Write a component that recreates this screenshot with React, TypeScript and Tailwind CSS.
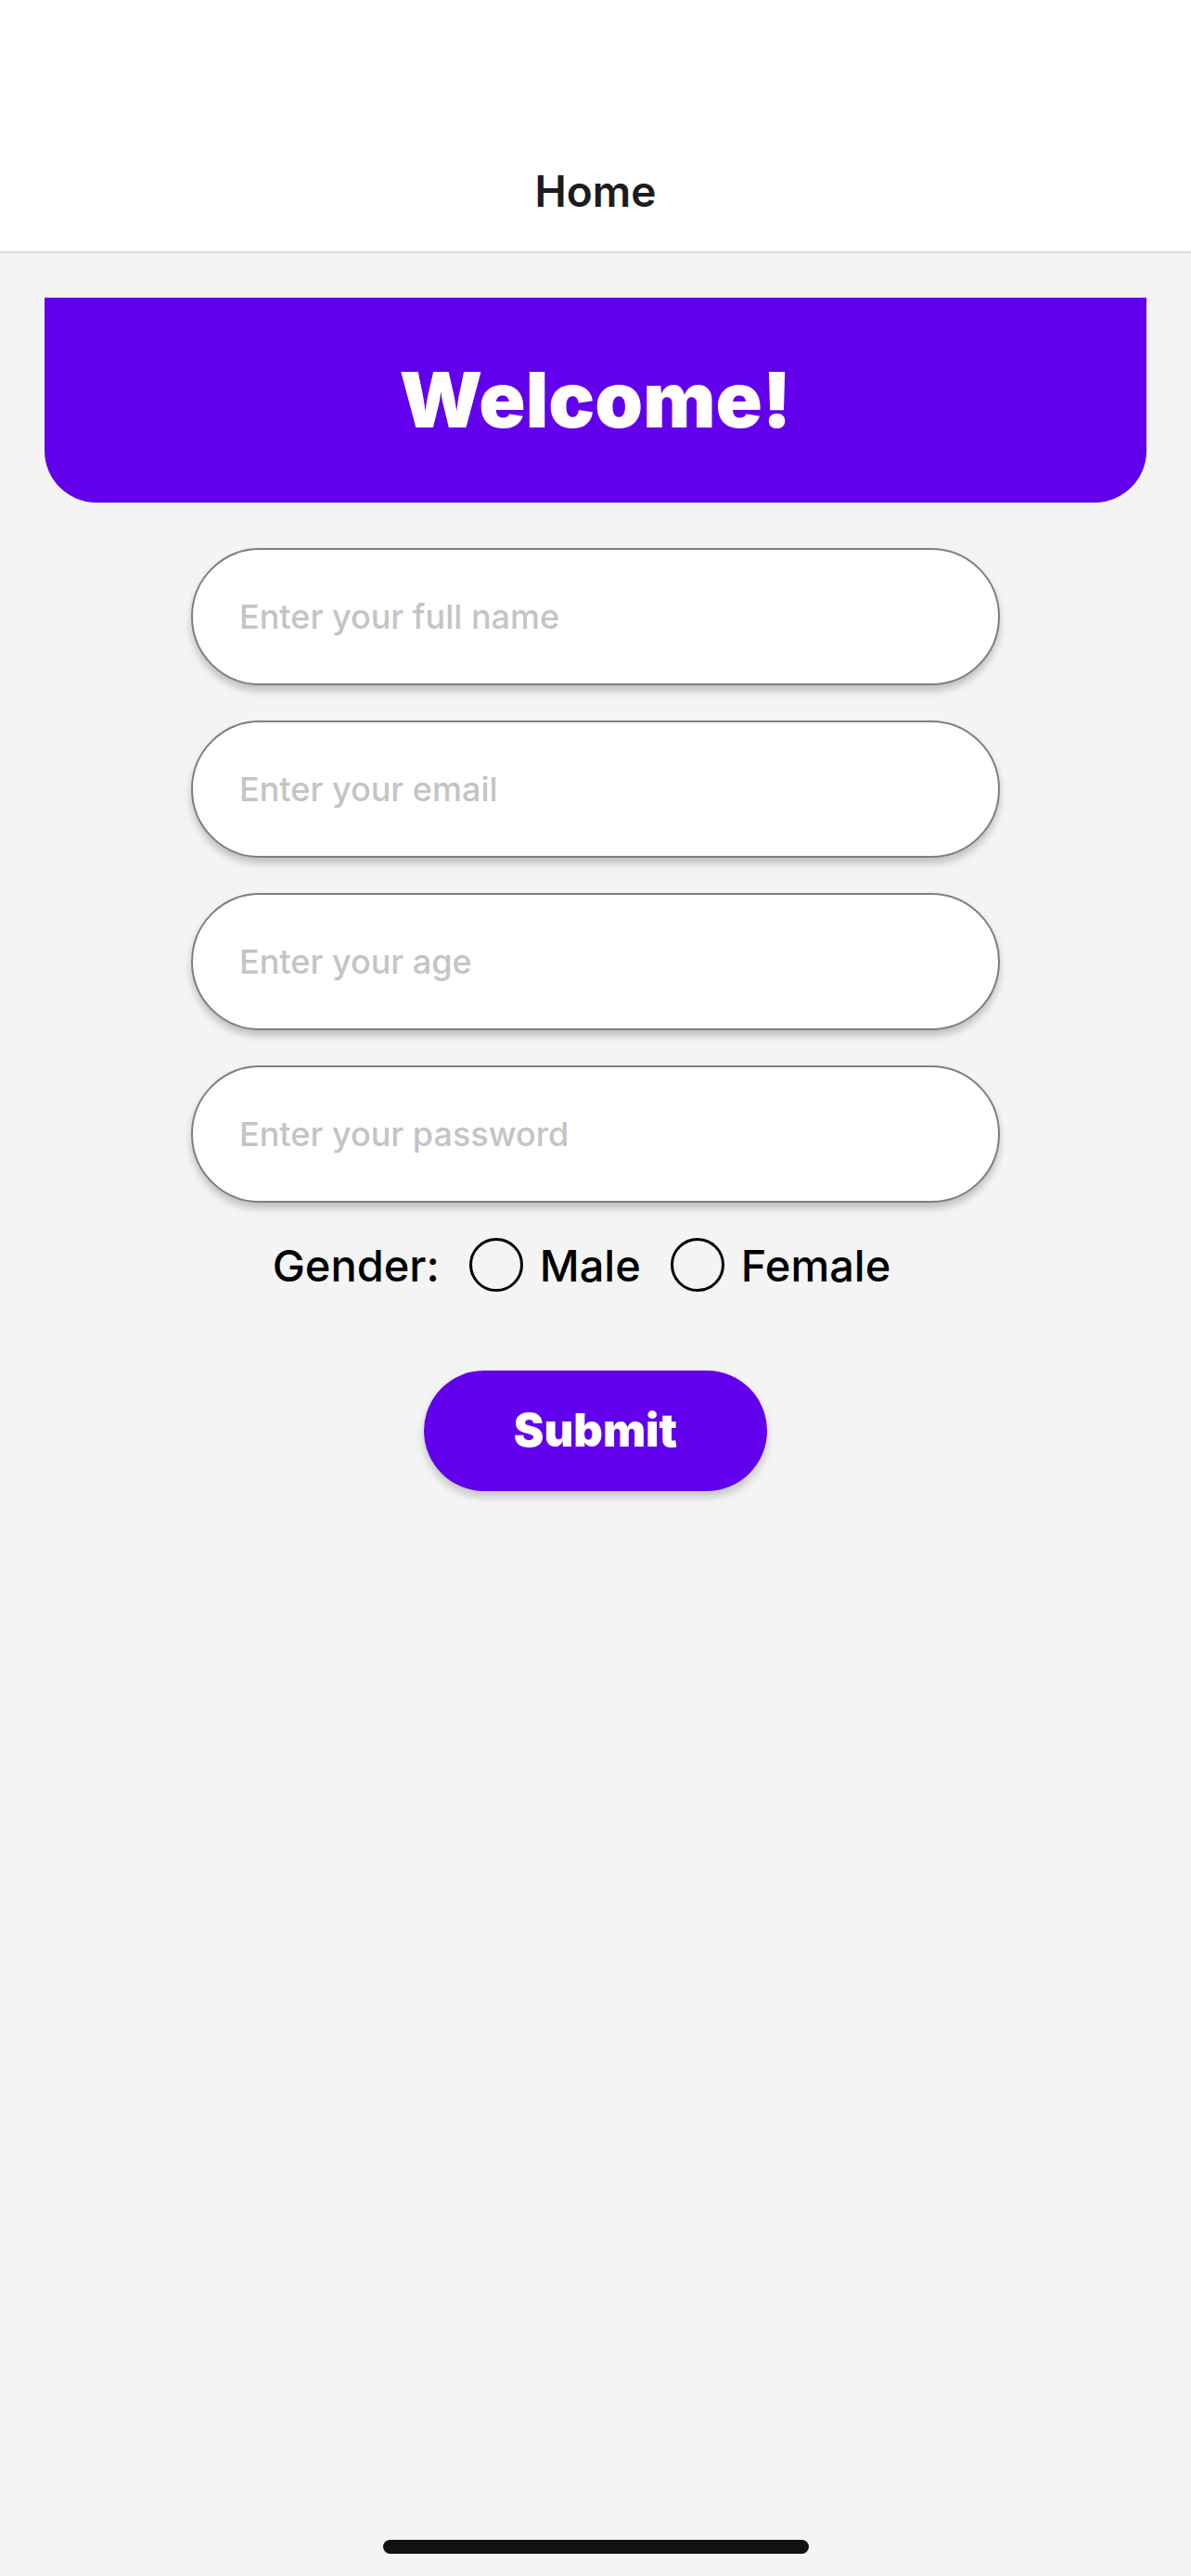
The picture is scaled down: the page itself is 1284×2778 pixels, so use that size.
import { useState } from 'react'

const fields = [
  { placeholder: 'Enter your full name', type: 'text' },
  { placeholder: 'Enter your email', type: 'email' },
  { placeholder: 'Enter your age', type: 'number' },
  { placeholder: 'Enter your password', type: 'password' },
]

function Radio({ label, checked, onClick }: { label: string; checked: boolean; onClick: () => void }) {
  return (
    <button type="button" onClick={onClick} className="flex items-center gap-[18px]">
      <span className="w-[58px] h-[58px] rounded-full border-[3px] border-black flex items-center justify-center">
        {checked && <span className="w-[34px] h-[34px] rounded-full bg-black" />}
      </span>
      <span className="text-[47px] font-medium text-black leading-none">{label}</span>
    </button>
  )
}

export default function App() {
  const [gender, setGender] = useState('')

  return (
    <div className="relative min-h-[2778px] bg-[#f4f4f4] font-['Inter','Liberation_Sans',sans-serif]">
      <header className="h-[273px] bg-white border-b-2 border-[#d9d9d9] flex justify-center pt-[170px]">
        <h1 className="text-[46px] leading-[72px] font-semibold text-[#1c1c1e]">Home</h1>
      </header>

      <div className="mx-[48px] mt-[48px] h-[221px] rounded-b-[56px] bg-[#6200ee] flex items-center justify-center">
        <h2 className="text-[83px] font-black text-white leading-none">Welcome!</h2>
      </div>

      <form className="flex flex-col items-center mt-[49px]" onSubmit={(e) => e.preventDefault()}>
        <div className="flex flex-col gap-[38px]">
          {fields.map((f) => (
            <input
              key={f.placeholder}
              type={f.type}
              placeholder={f.placeholder}
              className="w-[872px] h-[148px] rounded-full bg-white border-2 border-[#7f7f7f] pl-[50px] pr-[50px] text-[36px] font-medium text-black placeholder:text-[#c4c4c6] outline-none shadow-[0_6px_8px_rgba(0,0,0,0.22)]"
            />
          ))}
        </div>

        <div className="flex items-center mt-[38px] h-[58px] mr-[30px]">
          <span className="text-[47px] font-medium text-black leading-none mr-[32px]">Gender:</span>
          <div className="flex items-center gap-[32px]">
            <Radio label="Male" checked={gender === 'male'} onClick={() => setGender('male')} />
            <Radio label="Female" checked={gender === 'female'} onClick={() => setGender('female')} />
          </div>
        </div>

        <button
          type="submit"
          className="mt-[85px] w-[370px] h-[130px] rounded-full bg-[#6200ee] text-white text-[49px] font-black shadow-[0_6px_10px_rgba(0,0,0,0.2)]"
        >
          Submit
        </button>
      </form>

      <div className="absolute left-[413px] top-[2739px] w-[459px] h-[15px] rounded-full bg-[#111111]" />
    </div>
  )
}
